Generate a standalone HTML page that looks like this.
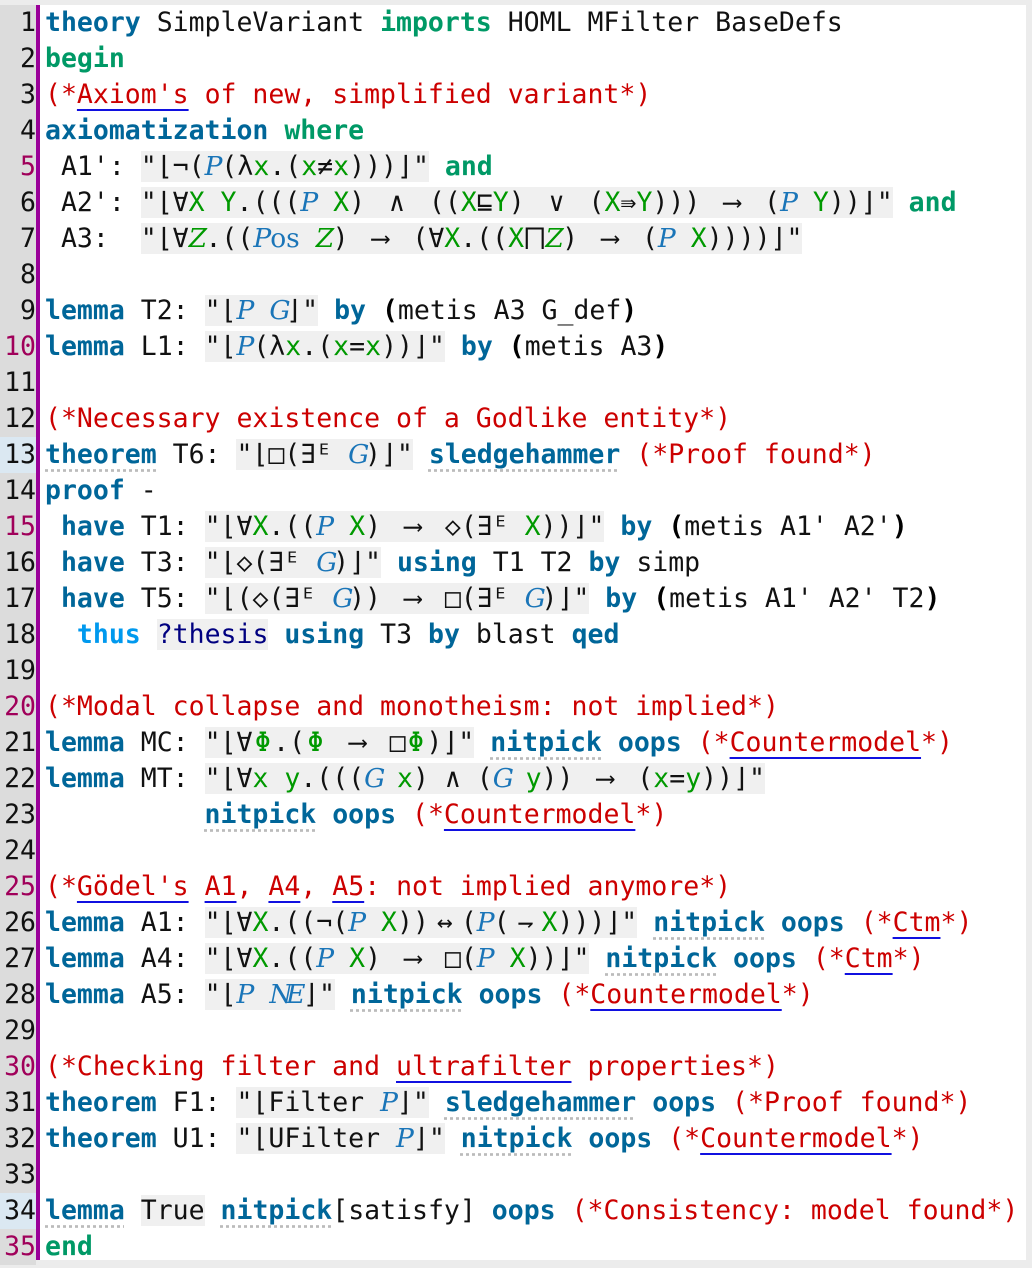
<!DOCTYPE html>
<html><head><meta charset="utf-8"><style>
html,body{margin:0;padding:0;}
body{width:1032px;height:1268px;background:#ececec;position:relative;overflow:hidden;font-family:"DejaVu Sans Mono","Liberation Mono",monospace;font-size:26.5px;}
#gut{position:absolute;left:0;top:5px;width:36px;height:1260px;background:#dcdcdc;}
#bar{position:absolute;left:36px;top:5px;width:4px;height:1255px;background:#9a0099;}
#ed{position:absolute;left:40px;top:5px;width:986px;height:1255px;background:#fff;}
.ln{position:absolute;left:0;width:36px;height:36px;line-height:36px;text-align:right;color:#111;}
.ln.m{color:#a0005a;}
.ln.h{background:#dbe8f2;}
.l{position:absolute;left:45px;height:36px;line-height:36px;white-space:pre;color:#111;}
.k{color:#006699;font-weight:bold;}
.g{color:#009966;font-weight:bold;}
.c{color:#cc0000;}
.s{background:#f0f0f0;}
.v{color:#009900;}
.p{color:#1a75b8;font-style:italic;display:inline-block;width:1ch;text-align:center;font-family:"DejaVu Serif",serif;}
.z{color:#009900;font-style:italic;display:inline-block;width:1ch;text-align:center;font-family:"DejaVu Serif",serif;}
.o{display:inline-block;width:2ch;text-align:center;}
.f{display:inline-block;width:1.3ch;text-align:center;color:#009900;}
.u{text-decoration:underline;text-decoration-color:#1010e0;text-underline-offset:6px;}
.w{text-decoration:underline dotted #bbb;text-underline-offset:6px;}
.b{color:#000;font-weight:bold;}
.lt{color:#0099ee;font-weight:bold;}
.nv{color:#000080;}
</style></head><body>
<div id="gut"></div><div id="bar"></div><div id="ed"></div>
<div class="ln" style="top:5px">1</div>
<div class="ln" style="top:41px">2</div>
<div class="ln" style="top:77px">3</div>
<div class="ln" style="top:113px">4</div>
<div class="ln m" style="top:149px">5</div>
<div class="ln" style="top:185px">6</div>
<div class="ln" style="top:221px">7</div>
<div class="ln" style="top:257px">8</div>
<div class="ln" style="top:293px">9</div>
<div class="ln m" style="top:329px">10</div>
<div class="ln" style="top:365px">11</div>
<div class="ln" style="top:401px">12</div>
<div class="ln h" style="top:437px">13</div>
<div class="ln" style="top:473px">14</div>
<div class="ln m" style="top:509px">15</div>
<div class="ln" style="top:545px">16</div>
<div class="ln" style="top:581px">17</div>
<div class="ln" style="top:617px">18</div>
<div class="ln" style="top:653px">19</div>
<div class="ln m" style="top:689px">20</div>
<div class="ln" style="top:725px">21</div>
<div class="ln" style="top:761px">22</div>
<div class="ln" style="top:797px">23</div>
<div class="ln" style="top:833px">24</div>
<div class="ln m" style="top:869px">25</div>
<div class="ln" style="top:905px">26</div>
<div class="ln" style="top:941px">27</div>
<div class="ln" style="top:977px">28</div>
<div class="ln" style="top:1013px">29</div>
<div class="ln m" style="top:1049px">30</div>
<div class="ln" style="top:1085px">31</div>
<div class="ln" style="top:1121px">32</div>
<div class="ln" style="top:1157px">33</div>
<div class="ln h" style="top:1193px">34</div>
<div class="ln m" style="top:1229px">35</div>

<div class="l" style="top:5px"><span class="k">theory</span> SimpleVariant <span class="g">imports</span> HOML MFilter BaseDefs</div>
<div class="l" style="top:41px"><span class="g">begin</span></div>
<div class="l c" style="top:77px">(*<span class="u">Axiom's</span> of new, simplified variant*)</div>
<div class="l" style="top:113px"><span class="k">axiomatization</span> <span class="g">where</span></div>
<div class="l" style="top:149px"> A1': <span class="s">"⌊¬(<span class="p">P</span>(λ<span class="v">x</span>.(<span class="v">x</span>≠<span class="v">x</span>)))⌋"</span> <span class="g">and</span></div>
<div class="l" style="top:185px"> A2': <span class="s">"⌊∀<span class="v">X</span> <span class="v">Y</span>.(((<span class="p">P</span> <span class="v">X</span>) <span class="o">∧</span> ((<span class="v">X</span>⊑<span class="v">Y</span>) <span class="o">∨</span> (<span class="v">X</span>⇛<span class="v">Y</span>))) <span class="o">⟶</span> (<span class="p">P</span> <span class="v">Y</span>))⌋"</span> <span class="g">and</span></div>
<div class="l" style="top:221px"> A3:  <span class="s">"⌊∀<span class="z">Z</span>.((<span class="p">P</span><span style="color:#1a75b8;font-family:'DejaVu Serif',serif">os</span> <span class="z">Z</span>) <span class="o">⟶</span> (∀<span class="v">X</span>.((<span class="v">X</span>⨅<span class="z">Z</span>) <span class="o">⟶</span> (<span class="p">P</span> <span class="v">X</span>))))⌋"</span></div>
<div class="l" style="top:293px"><span class="k">lemma</span> T2: <span class="s">"⌊<span class="p">P</span> <span class="p">G</span>⌋"</span> <span class="k">by</span> <span class="b">(</span>metis A3 G_def<span class="b">)</span></div>
<div class="l" style="top:329px"><span class="k">lemma</span> L1: <span class="s">"⌊<span class="p">P</span>(λ<span class="v">x</span>.(<span class="v">x</span>=<span class="v">x</span>))⌋"</span> <span class="k">by</span> <span class="b">(</span>metis A3<span class="b">)</span></div>
<div class="l c" style="top:401px">(*Necessary existence of a Godlike entity*)</div>
<div class="l" style="top:437px"><span class="k w">theorem</span> T6: <span class="s">"⌊□(∃ᴱ <span class="p">G</span>)⌋"</span> <span class="k w">sledgehammer</span> <span class="c">(*Proof found*)</span></div>
<div class="l" style="top:473px"><span class="k">proof</span> -</div>
<div class="l" style="top:509px"> <span class="k">have</span> T1: <span class="s">"⌊∀<span class="v">X</span>.((<span class="p">P</span> <span class="v">X</span>) <span class="o">⟶</span> ◇(∃ᴱ <span class="v">X</span>))⌋"</span> <span class="k">by</span> <span class="b">(</span>metis A1' A2'<span class="b">)</span></div>
<div class="l" style="top:545px"> <span class="k">have</span> T3: <span class="s">"⌊◇(∃ᴱ <span class="p">G</span>)⌋"</span> <span class="k">using</span> T1 T2 <span class="k">by</span> simp</div>
<div class="l" style="top:581px"> <span class="k">have</span> T5: <span class="s">"⌊(◇(∃ᴱ <span class="p">G</span>)) <span class="o">⟶</span> □(∃ᴱ <span class="p">G</span>)⌋"</span> <span class="k">by</span> <span class="b">(</span>metis A1' A2' T2<span class="b">)</span></div>
<div class="l" style="top:617px">  <span class="lt">thus</span> <span class="s nv">?thesis</span> <span class="k">using</span> T3 <span class="k">by</span> blast <span class="k">qed</span></div>
<div class="l c" style="top:689px">(*Modal collapse and monotheism: not implied*)</div>
<div class="l" style="top:725px"><span class="k">lemma</span> MC: <span class="s">"⌊∀<span class="f">Φ</span>.(<span class="f">Φ</span> <span class="o">⟶</span> □<span class="f">Φ</span>)⌋"</span> <span class="k w">nitpick</span> <span class="k">oops</span> <span class="c">(*<span class="u">Countermodel</span>*)</span></div>
<div class="l" style="top:761px"><span class="k">lemma</span> MT: <span class="s">"⌊∀<span class="v">x</span> <span class="v">y</span>.(((<span class="p">G</span> <span class="v">x</span>) ∧ (<span class="p">G</span> <span class="v">y</span>)) <span class="o">⟶</span> (<span class="v">x</span>=<span class="v">y</span>))⌋"</span></div>
<div class="l" style="top:797px">          <span class="k w">nitpick</span> <span class="k">oops</span> <span class="c">(*<span class="u">Countermodel</span>*)</span></div>
<div class="l c" style="top:869px">(*<span class="u">Gödel's</span> <span class="u">A1</span>, <span class="u">A4</span>, <span class="u">A5</span>: not implied anymore*)</div>
<div class="l" style="top:905px"><span class="k">lemma</span> A1: <span class="s">"⌊∀<span class="v">X</span>.((¬(<span class="p">P</span> <span class="v">X</span>))<span class="o">↔</span>(<span class="p">P</span>(<span class="o">⇁</span><span class="v">X</span>)))⌋"</span> <span class="k w">nitpick</span> <span class="k">oops</span> <span class="c">(*<span class="u">Ctm</span>*)</span></div>
<div class="l" style="top:941px"><span class="k">lemma</span> A4: <span class="s">"⌊∀<span class="v">X</span>.((<span class="p">P</span> <span class="v">X</span>) <span class="o">⟶</span> □(<span class="p">P</span> <span class="v">X</span>))⌋"</span> <span class="k w">nitpick</span> <span class="k">oops</span> <span class="c">(*<span class="u">Ctm</span>*)</span></div>
<div class="l" style="top:977px"><span class="k">lemma</span> A5: <span class="s">"⌊<span class="p">P</span> <span class="p">N</span><span class="p">E</span>⌋"</span> <span class="k w">nitpick</span> <span class="k">oops</span> <span class="c">(*<span class="u">Countermodel</span>*)</span></div>
<div class="l c" style="top:1049px">(*Checking filter and <span class="u">ultrafilter</span> properties*)</div>
<div class="l" style="top:1085px"><span class="k">theorem</span> F1: <span class="s">"⌊Filter <span class="p">P</span>⌋"</span> <span class="k w">sledgehammer</span> <span class="k">oops</span> <span class="c">(*Proof found*)</span></div>
<div class="l" style="top:1121px"><span class="k">theorem</span> U1: <span class="s">"⌊UFilter <span class="p">P</span>⌋"</span> <span class="k w">nitpick</span> <span class="k">oops</span> <span class="c">(*<span class="u">Countermodel</span>*)</span></div>
<div class="l" style="top:1193px"><span class="k w">lemma</span> <span class="s">True</span> <span class="k w">nitpick</span>[satisfy] <span class="k">oops</span> <span class="c">(*Consistency: model found*)</span></div>
<div class="l" style="top:1229px"><span class="g">end</span></div>
</body></html>
